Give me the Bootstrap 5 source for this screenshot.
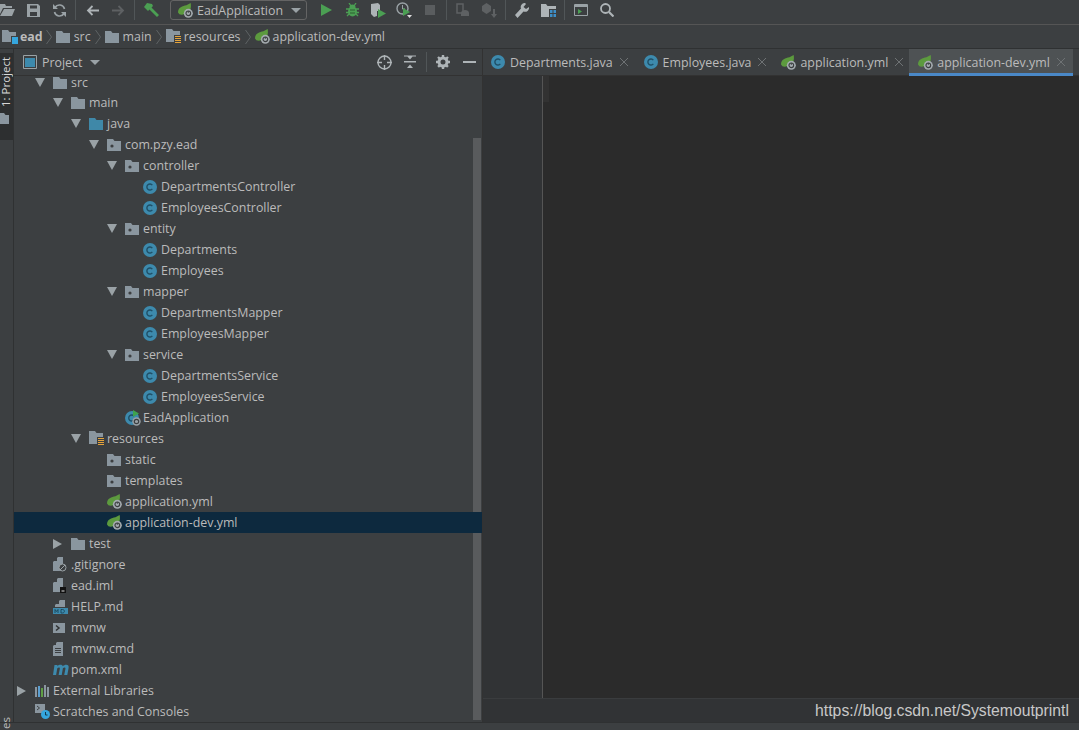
<!DOCTYPE html>
<html lang="en">
<head>
  <meta charset="UTF-8" />
  <title>ead - application-dev.yml</title>
  <link href="https://cdn.jsdelivr.net/npm/bootstrap@5.3.2/dist/css/bootstrap.min.css" rel="stylesheet">
  <script src="https://cdn.jsdelivr.net/npm/bootstrap@5.3.2/dist/js/bootstrap.bundle.min.js"></script>
  <style>
    html, body { height: 730px; overflow: hidden; }
    body { background: #3c3f41; color: #bbb; font: 12.4px/21px "Open Sans", "Noto Sans", sans-serif; }
    svg { display: block; flex: none; }
    .toolbar { height: 25px; margin-left: -6px; border-bottom: 1px solid #555; }
    .slot { width: 26px; height: 20px; flex: none; }
    .sep { width: 1px; height: 20px; background: #515658; margin: 0 3px; flex: none; }
    .run-box { width: 137px; height: 20px; margin: 0 6px 0 6px; border: 1px solid #646464; border-radius: 3px; padding-left: 7px; flex: none; }
    .crumbs { height: 24px; border-bottom: 1px solid #2f3132; padding-left: 2px; }
    .crumbs svg.ic { margin-right: 4px; }
    .crumbs svg.ic.wide { margin-right: 2px; }
    .crumbs svg.ic.mid { margin-right: 3px; }
    .crumbs .chev { margin: 0 4px; }
    .crumbs .bold { margin-right: -1px; }
    .strip { width: 14px; flex: none; border-right: 1px solid #2f3132; position: relative; }
    .strip-active { height: 87px; background: #2d2f30; }
    .strip-label { writing-mode: vertical-rl; transform: rotate(180deg); color: #d8d8d8; font-size: 11.500px; line-height: 12px; height: 56px; padding-top: 2px; margin-top: 4px; white-space: nowrap; }
    .strip-end { position: absolute; left: 0; bottom: -7px; writing-mode: vertical-rl; transform: rotate(180deg); font-size: 11.500px; line-height: 12px; height: 14px; }
    .project { width: 468px; flex: none; position: relative; }
    .pane-head { height: 27px; border-bottom: 1px solid #323232; padding-left: 9px; }
    .pane-btn { width: 26px; display: flex; justify-content: center; }
    .row-item { height: 21px; white-space: nowrap; position: relative; }
    .row-item:first-child { height: 16px; padding-bottom: 3px; line-height: 13px; }
    .row-item.active { background: #0d293e; z-index: 1; }
    .arrow { width: 18px; flex: none; }
    .icon { width: 18px; flex: none; }
    .scroll-thumb { position: absolute; right: 1px; top: 89px; bottom: 2px; width: 8px; background: #595b5d; }
    .editor-pane { flex: 1; border-left: 1px solid #323232; min-width: 0; }
    .tabs { height: 27px; border-bottom: 1px solid #323232; }
    .tab-item { height: 26px; padding: 0 8px; white-space: nowrap; color: #bbb; }
    .tab-item svg.ic { margin-right: 5px; }
    .tab-item.leaf svg.ic { margin-right: 4px; }
    .tab-item.tight { padding-right: 7px; }
    .tab-item.leaf.tight { padding-right: 6px; }
    .tab-item.active { background: #4e5254; border-bottom: 3px solid #4a88c7; width: 164px; height: 27px; padding: 2px 8px 0 9px; flex: none; }
    .close-x { margin-left: 7px; }
    .gutter { width: 60px; background: #313335; border-right: 1px solid #555; flex: none; }
    .code { background: #2b2b2b; }
    .current-line { width: 6px; height: 26px; background: #323232; }
    .editor-foot { height: 24px; background: #313335; border-top: 1px solid #3a3c3e; }
    .watermark { font: 15.750px/24px "Liberation Sans", Arial, sans-serif; color: #c8c8c8; padding-right: 10px; }
    .main { height: 674px; border-bottom: 1px solid #2f3132; }
    .bold { font-weight: 700; }
    .project-label { margin-left: 5px; }
  </style>
</head>
<body>
  <svg width="0" height="0" style="position:absolute">
    <defs>
      <symbol id="folder" viewBox="0 0 14 12"><path fill="#8a969f" d="M0 0h6l1.500 2H14v10H0z"/></symbol>
      <symbol id="folder-blue" viewBox="0 0 14 12"><path fill="#3f88a8" d="M0 0h6l1.500 2H14v10H0z"/></symbol>
      <symbol id="pkg" viewBox="0 0 14 12"><path fill="#8a969f" d="M0 0h6l1.500 2H14v10H0z"/><circle cx="5" cy="7" r="1.600" fill="#3c3f41"/></symbol>
      <symbol id="res" viewBox="0 0 16 15"><path fill="#8a969f" d="M0 0h6l1.500 2H14v4H8v7H0z"/><path fill="#e5a33b" d="M9 7h6v1H9zM9 9h6v1H9zM9 11h6v1H9zM9 13h6v1H9z"/></symbol>
      <symbol id="cls" viewBox="0 0 14 14"><circle cx="7" cy="7" r="7" fill="#3d8aad"/><path fill="none" stroke="#1f4f66" stroke-width="1.400" d="M9.300 5.200A3 3 0 1 0 9.300 8.800"/></symbol>
      <symbol id="spring" viewBox="0 0 16 16"><path fill="#5c9a3e" d="M0 10C0 5 5 3 9 2.500L13.500 0c1 5-.5 9-3 10.500-3 1.800-7 2.500-9 1.500z"/><circle cx="11" cy="11" r="4.800" fill="#a4abaf"/><circle cx="11" cy="11" r="2.500" fill="none" stroke="#3c3f41" stroke-width="1.200"/><path stroke="#3c3f41" d="M11 8.500v2"/></symbol>
      <symbol id="spring-app" viewBox="0 0 16 16"><circle cx="7" cy="8" r="7" fill="#3d8aad"/><path fill="none" stroke="#1f4f66" stroke-width="1.400" d="M9 6a3 3 0 1 0 0 4"/><path fill="#3fa34d" d="M8 0l6 3.500L8 7z"/><circle cx="11.500" cy="11.500" r="4.200" fill="#9aa2a6"/><circle cx="11.500" cy="11.500" r="2.200" fill="none" stroke="#3c3f41" stroke-width="1.200"/></symbol>
      <symbol id="ignore" viewBox="0 0 14 15"><path fill="#8a969f" d="M5 0h5v14H0V5z"/><path fill="#3c3f41" d="M4 0v4H0z"/><circle cx="9.500" cy="10.500" r="3.500" fill="#3c3f41" stroke="#9aa2a6"/><path stroke="#9aa2a6" d="M7 13l5-5"/></symbol>
      <symbol id="iml" viewBox="0 0 14 15"><path fill="#8a969f" d="M5 0h5v14H0V5z"/><path fill="#3c3f41" d="M4 0v4H0z"/><path fill="#111" d="M7 9h6v6H7z"/><path fill="#ddd" d="M8.500 12.500h3v1h-3z"/></symbol>
      <symbol id="md" viewBox="0 0 15 14"><path fill="#8a969f" d="M7 0h5v7H2V5z"/><path fill="#3c3f41" d="M6 0v4H2z"/><path fill="#3d8aad" d="M0 8h15v6H0z"/><path fill="none" stroke="#1c4a60" d="M2 13V9.500l1.500 2 1.500-2V13M8 9.500v3.500h1.500c2.500 0 2.500-3.500 0-3.500z"/></symbol>
      <symbol id="sh" viewBox="0 0 12 10"><path fill="#8a969f" d="M0 0h12v10H0z"/><path fill="none" stroke="#2f3132" stroke-width="1.500" d="M3 2.500L6 5 3 7.500"/></symbol>
      <symbol id="txt" viewBox="0 0 10 14"><path fill="#8a969f" d="M4 0h6v14H0V4z"/><path fill="#3c3f41" d="M3 0v3H0zM2 6h6v1H2zM2 8h6v1H2zM2 10h6v1H2z"/></symbol>
      <symbol id="mvn" viewBox="0 0 16 13"><path fill="#3d8aad" d="M1.500 2h3l-.2 1.200C5.300 2.200 6.500 1.800 7.500 1.800c1.200 0 2 .5 2.300 1.500 1-1 2.300-1.500 3.400-1.500 1.900 0 2.800 1.200 2.400 3.200L14.300 12h-3.100l1.200-6c.2-1-.1-1.500-.8-1.500-.6 0-1.200.3-1.700.8L8.700 12H5.600l1.200-6c.2-1-.1-1.500-.8-1.500-.6 0-1.200.3-1.700.8L3.100 12H0z"/></symbol>
      <symbol id="libs" viewBox="0 0 14 12"><path fill="#8a969f" d="M0 2h2v10H0zM9 0h2v12H9zM12 2h2v10h-2z"/><path fill="#5b9fd1" d="M3 1h2v11H3z"/><path fill="#5f9e45" d="M6 3h2v9H6z"/></symbol>
      <symbol id="scratch" viewBox="0 0 15 15"><path fill="#8a969f" d="M0 0h10v9H0z"/><path fill="none" stroke="#3c3f41" d="M2 2l2.500 2L2 6"/><circle cx="10.500" cy="10.500" r="4.500" fill="#35a6de"/><path fill="none" stroke="#13384a" d="M10.500 8v3h2"/></symbol>
      <symbol id="chev" viewBox="0 0 6 16"><path fill="none" stroke="#5e6365" d="M.5 1l5 7-5 7"/></symbol>
      <symbol id="x" viewBox="0 0 8 8"><path stroke="#6e7274" d="M0 0l8 8M8 0L0 8"/></symbol>
    </defs>
  </svg>

  <div class="toolbar d-flex align-items-start">
    <div class="slot d-flex align-items-center justify-content-center"><svg width="15" height="12" viewBox="0 0 15 12"><path fill="#9aa2a6" d="M0 0h5l1 2h6v2H3L0 10z"/><path fill="#9aa2a6" d="M4 5h11l-3 7H0z"/></svg></div>
    <div class="slot d-flex align-items-center justify-content-center"><svg width="13" height="13" viewBox="0 0 13 13"><path fill="#9aa2a6" d="M0 0h11l2 2v11H0z"/><path fill="#3c3f41" d="M3 1.500h7v3H3zM3 8h7v4H3z"/></svg></div>
    <div class="slot d-flex align-items-center justify-content-center"><svg width="13" height="13" viewBox="0 0 13 13"><path fill="none" stroke="#9aa2a6" stroke-width="1.600" d="M11.500 5A5.200 5.200 0 0 0 2 3.500M1.500 8A5.200 5.200 0 0 0 11 9.500"/><path fill="#9aa2a6" d="M0 0v5h5zM13 13V8H8z"/></svg></div>
    <div class="sep"></div>
    <div class="slot d-flex align-items-center justify-content-center"><svg width="13" height="11" viewBox="0 0 13 11"><path fill="none" stroke="#aeb4b7" stroke-width="1.800" d="M13 5.500H2M6.500 1L2 5.500 6.500 10"/></svg></div>
    <div class="slot d-flex align-items-center justify-content-center"><svg width="13" height="11" viewBox="0 0 13 11"><path fill="none" stroke="#5e6163" stroke-width="1.800" d="M0 5.500h11M6.500 1L11 5.500 6.500 10"/></svg></div>
    <div class="sep"></div>
    <div class="slot d-flex align-items-center justify-content-center"><svg width="15" height="14" viewBox="0 0 15 14"><path fill="#4b9f53" d="M3 0l5 1 1 2-1.500 1.500L15 12l-2 2-7.500-7.500L4 8 0 4z"/></svg></div>
    <div class="run-box d-flex align-items-center">
      <svg class="me-1" width="15" height="15"><use href="#spring"/></svg>
      <span>EadApplication</span>
      <svg class="ms-2" width="10" height="5" viewBox="0 0 10 5"><path fill="#9aa2a6" d="M0 0h10L5 5z"/></svg>
    </div>
    <div class="slot d-flex align-items-center justify-content-center"><svg width="11" height="12" viewBox="0 0 11 12"><path fill="#4b9f53" d="M0 0l11 6-11 6z"/></svg></div>
    <div class="slot d-flex align-items-center justify-content-center"><svg width="13" height="14" viewBox="0 0 13 14"><path fill="none" stroke="#4b9f53" stroke-width="1.300" d="M3 0l2 3M10 0L8 3M0 6h13M0 9.500h13M1 13l2-2M12 13l-2-2"/><ellipse cx="6.500" cy="4" rx="3" ry="2.500" fill="#4b9f53"/><ellipse cx="6.500" cy="8.500" rx="4.500" ry="5" fill="#4b9f53"/><path fill="#2e5f33" d="M4 6.500h5v1H4zM4 9.500h5v1H4z"/></svg></div>
    <div class="slot d-flex align-items-center justify-content-center"><svg width="15" height="15" viewBox="0 0 15 15"><path fill="#aeb4b7" d="M0 1l7-1 2 2v6H6v5l-3 1-3-3z"/><path fill="#4b9f53" d="M7 6l8 4.500L7 15z"/></svg></div>
    <div class="slot d-flex align-items-center justify-content-center"><svg width="16" height="16" viewBox="0 0 16 16"><circle cx="6.500" cy="6.500" r="5.500" fill="none" stroke="#9aa2a6" stroke-width="1.400"/><path stroke="#9aa2a6" fill="none" d="M6.500 3v4H9"/><path fill="#4b9f53" d="M7 6l7 4-7 4z"/><path fill="#ddd" d="M11 13h5l-2.500 3z"/></svg></div>
    <div class="slot d-flex align-items-center justify-content-center"><svg width="10" height="10"><path fill="#5a5d5f" d="M0 0h10v10H0z"/></svg></div>
    <div class="sep"></div>
    <div class="slot d-flex align-items-center justify-content-center"><svg width="14" height="15" viewBox="0 0 14 15"><path fill="none" stroke="#5e6163" stroke-width="1.500" d="M1 1h6v9H1z"/><path fill="#5e6163" d="M5 10c0-4 8-4 8 0v3H5z"/></svg></div>
    <div class="slot d-flex align-items-center justify-content-center"><svg width="15" height="15" viewBox="0 0 15 15"><path fill="#5e6163" d="M0 3l4.500-3L9 3v5l-4.500 3L0 8zM11 6h2v5h2l-3 4-3-4h2z"/></svg></div>
    <div class="sep"></div>
    <div class="slot d-flex align-items-center justify-content-center"><svg width="14" height="15" viewBox="0 0 14 15"><path fill="#aeb4b7" d="M10 0a4 4 0 0 0-4 5.500L0 12l2.500 3L8.500 8.500A4 4 0 0 0 14 4l-3 2-2.500-2L11 1z"/></svg></div>
    <div class="slot d-flex align-items-center justify-content-center"><svg width="15" height="13" viewBox="0 0 15 13"><path fill="#aeb4b7" d="M0 0h5l1.500 2H15v3H8v8H0z"/><path fill="#3d8fc9" d="M9 6h2.500v3H9zM12.500 6H15v3h-2.500zM9 10h2.500v3H9zM12.500 10H15v3h-2.500z"/></svg></div>
    <div class="sep"></div>
    <div class="slot d-flex align-items-center justify-content-center"><svg width="14" height="12" viewBox="0 0 14 12"><path fill="none" stroke="#9aa2a6" d="M.5.500h13v11H.500z"/><path fill="#9aa2a6" d="M1 1h12v2H1z"/><path fill="#4b9f53" d="M4 5l4 2.500L4 10z"/></svg></div>
    <div class="slot d-flex align-items-center justify-content-center"><svg width="14" height="14" viewBox="0 0 14 14"><circle cx="5.500" cy="5.500" r="4.500" fill="none" stroke="#aeb4b7" stroke-width="1.800"/><path stroke="#aeb4b7" stroke-width="2.200" d="M9 9l4.500 4.500"/></svg></div>
  </div>

  <div class="crumbs d-flex align-items-center">
    <svg class="ic wide" width="16" height="14" viewBox="0 0 16 14"><path fill="#8a969f" d="M0 0h6l1.500 2H14v4H9v6H0z"/><path fill="#35a6de" d="M10 7h6v7h-6z"/></svg>
    <span class="bold">ead</span>
    <svg class="chev" width="6" height="16"><use href="#chev"/></svg>
    <svg class="ic" width="14" height="12"><use href="#folder"/></svg><span>src</span>
    <svg class="chev" width="6" height="16"><use href="#chev"/></svg>
    <svg class="ic" width="14" height="12"><use href="#folder"/></svg><span>main</span>
    <svg class="chev" width="6" height="16"><use href="#chev"/></svg>
    <svg class="ic wide" width="16" height="15"><use href="#res"/></svg><span>resources</span>
    <svg class="chev" width="6" height="16"><use href="#chev"/></svg>
    <svg class="ic mid" width="15" height="15"><use href="#spring"/></svg><span>application-dev.yml</span>
  </div>

  <div class="main d-flex">
    <div class="strip">
      <div class="strip-active">
        <div class="strip-label">1: Project</div>
        <svg class="mt-1" width="9" height="11" viewBox="0 0 9 11"><path fill="#8a969f" d="M0 0h4l1.500 2H9v9H0z"/></svg>
      </div>
      <div class="strip-end">es</div>
    </div>

    <div class="project">
      <div class="pane-head d-flex align-items-center">
        <svg width="14" height="14" viewBox="0 0 14 14"><path fill="none" stroke="#9aa2a6" d="M.5.500h13v13H.500z"/><path fill="#3d8aad" d="M2 3h10v9H2z"/></svg>
        <span class="project-label">Project</span>
        <svg class="ms-2" width="10" height="5" viewBox="0 0 10 5"><path fill="#9aa2a6" d="M0 0h10L5 5z"/></svg>
        <div class="ms-auto d-flex align-items-center">
          <div class="pane-btn"><svg width="15" height="15" viewBox="0 0 15 15"><circle cx="7.500" cy="7.500" r="6.500" fill="none" stroke="#aeb4b7" stroke-width="1.400"/><path stroke="#aeb4b7" stroke-width="1.400" d="M7.500 0v5M7.500 10v5M0 7.500h5M10 7.500h5"/></svg></div>
          <div class="pane-btn"><svg width="14" height="14" viewBox="0 0 14 14"><path fill="#aeb4b7" d="M1 6h12v1.500H1zM4 1h6L7 4.500zM4 13h6l-3-3.500zM1 .5h12v1H1z" /></svg></div>
          <div class="sep"></div>
          <div class="pane-btn"><svg width="14" height="14" viewBox="0 0 14 14"><circle cx="7" cy="7" r="4" fill="none" stroke="#aeb4b7" stroke-width="3"/><path stroke="#aeb4b7" stroke-width="2.400" d="M7 0v14M0 7h14M2 2l10 10M12 2L2 12" stroke-dasharray="2.500 9"/></svg></div>
          <div class="pane-btn"><svg width="13" height="2"><path fill="#aeb4b7" d="M0 0h13v2H0z"/></svg></div>
        </div>
      </div>
      <div id="tree"></div>
      <div class="scroll-thumb"></div>
    </div>

    <div class="editor-pane d-flex flex-column">
      <div class="tabs d-flex align-items-start">
        <div class="tab-item d-flex align-items-center"><svg class="ic" width="14" height="14"><use href="#cls"/></svg><span>Departments.java</span><svg class="close-x" width="8" height="8"><use href="#x"/></svg></div>
        <div class="tab-item tight d-flex align-items-center"><svg class="ic" width="14" height="14"><use href="#cls"/></svg><span>Employees.java</span><svg class="close-x" width="8" height="8"><use href="#x"/></svg></div>
        <div class="tab-item leaf tight d-flex align-items-center"><svg class="ic" width="15" height="15"><use href="#spring"/></svg><span>application.yml</span><svg class="close-x" width="8" height="8"><use href="#x"/></svg></div>
        <div class="tab-item leaf active d-flex align-items-center"><svg class="ic" width="15" height="15"><use href="#spring"/></svg><span>application-dev.yml</span><svg class="close-x" width="8" height="8"><use href="#x"/></svg></div>
      </div>
      <div class="d-flex flex-grow-1">
        <div class="gutter"></div>
        <div class="code flex-grow-1"><div class="current-line"></div></div>
      </div>
      <div class="editor-foot text-end watermark">https://blog.csdn.net/Systemoutprintl</div>
    </div>
  </div>

  <script>
    // level, open state (1 open, 0 closed, null leaf), icon, label
    const rows = [
      [1, 1, 'folder', 'src'], [2, 1, 'folder', 'main'], [3, 1, 'folder-blue', 'java'],
      [4, 1, 'pkg', 'com.pzy.ead'], [5, 1, 'pkg', 'controller'],
      [6, null, 'cls', 'DepartmentsController'], [6, null, 'cls', 'EmployeesController'],
      [5, 1, 'pkg', 'entity'], [6, null, 'cls', 'Departments'], [6, null, 'cls', 'Employees'],
      [5, 1, 'pkg', 'mapper'], [6, null, 'cls', 'DepartmentsMapper'], [6, null, 'cls', 'EmployeesMapper'],
      [5, 1, 'pkg', 'service'], [6, null, 'cls', 'DepartmentsService'], [6, null, 'cls', 'EmployeesService'],
      [5, null, 'spring-app', 'EadApplication'],
      [3, 1, 'res', 'resources'], [4, null, 'pkg', 'static'], [4, null, 'pkg', 'templates'],
      [4, null, 'spring', 'application.yml'], [4, null, 'spring', 'application-dev.yml'],
      [2, 0, 'folder', 'test'], [1, null, 'ignore', '.gitignore'], [1, null, 'iml', 'ead.iml'],
      [1, null, 'md', 'HELP.md'], [1, null, 'sh', 'mvnw'], [1, null, 'txt', 'mvnw.cmd'], [1, null, 'mvn', 'pom.xml'],
      [0, 0, 'libs', 'External Libraries'], [0, null, 'scratch', 'Scratches and Consoles']
    ];
    const sizes = { folder: [14, 12], 'folder-blue': [14, 12], pkg: [14, 12], res: [16, 15], cls: [14, 14], spring: [15, 15], 'spring-app': [16, 16],
      ignore: [14, 15], iml: [14, 15], md: [15, 14], sh: [12, 10], txt: [10, 14], mvn: [16, 13], libs: [14, 12], scratch: [15, 15] };
    const tree = document.getElementById('tree');
    rows.forEach(([level, open, icon, label]) => {
      const [w, h] = sizes[icon];
      let arrow = '';
      if (open === 1) arrow = '<svg width="10" height="9" viewBox="0 0 10 9"><path fill="#9aa2a6" d="M0 0h10L5 9z"/></svg>';
      if (open === 0) arrow = '<svg width="9" height="10" viewBox="0 0 9 10"><path fill="#9aa2a6" d="M0 0l9 5-9 5z"/></svg>';
      const row = document.createElement('div');
      row.className = 'row-item d-flex align-items-center' + (label === 'application-dev.yml' ? ' active' : '');
      row.style.paddingLeft = (3 + 18 * level) + 'px';
      row.innerHTML = `<span class="arrow">${arrow}</span><span class="icon"><svg width="${w}" height="${h}"><use href="#${icon}"/></svg></span><span>${label}</span>`;
      tree.appendChild(row);
    });
  </script>
</body>
</html>
